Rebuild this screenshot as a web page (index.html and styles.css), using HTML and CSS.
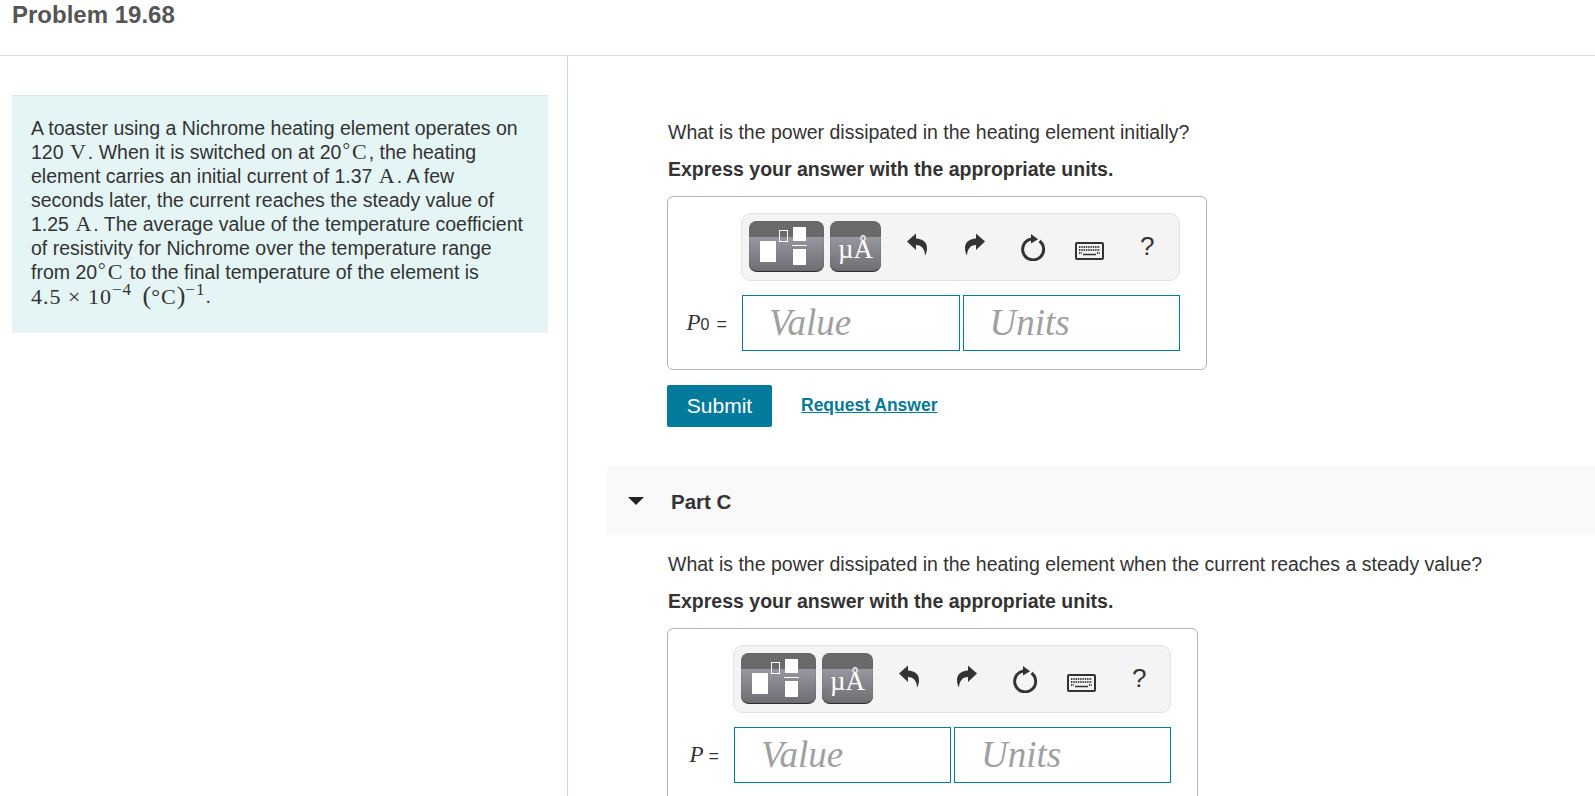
FILE: index.html
```html
<!DOCTYPE html>
<html lang="en">
<head>
<meta charset="utf-8">
<title>Problem 19.68</title>
<link rel="stylesheet" href="styles.css">
</head>
<body>
<svg class="defs" width="0" height="0" aria-hidden="true">
  <symbol id="i-undo" viewBox="0 0 20 24">
    <path d="M0 8.5 L9 0.5 V5.5 C15 5.5 20 9 20 15 C20 18 19.2 20.5 18 22.5 C18 17 15 12 9 12 V17 Z"/>
  </symbol>
  <symbol id="i-redo" viewBox="0 0 20 24">
    <path d="M20 8.5 L11 0.5 V5.5 C5 5.5 0 9 0 15 C0 18 0.8 20.5 2 22.5 C2 17 5 12 11 12 V17 Z"/>
  </symbol>
  <symbol id="i-reset" viewBox="0 0 26 28">
    <path class="ring" d="M19.5 8 A10.5 10.5 0 1 1 11.5 6"/>
    <path d="M11 1 L18 6.2 L11 10.5 Z"/>
  </symbol>
  <symbol id="i-keys" viewBox="0 0 29 18">
    <rect class="kb" x="1" y="1" width="27" height="16" rx="1"/>
    <path class="kbd" d="M4 5h21M4 8h21M4 11h3M22 11h3"/>
    <path class="kbs" d="M8 12.5h13"/>
  </symbol>
</svg>

<header class="topbar"><h1 class="title">Problem 19.68</h1></header>

<main class="layout">
  <aside class="sidebar">
    <div class="intro">
      <p>A toaster using a Nichrome heating element operates on 120 <span class="m">V</span>. When it is switched on at 20<sup class="deg">&deg;</sup><span class="m">C</span>, the heating element carries an initial current of 1.37 <span class="m">A</span>. A few seconds later, the current reaches the steady value of 1.25 <span class="m">A</span>. The average value of the temperature coefficient of resistivity for Nichrome over the temperature range from 20<sup class="deg">&deg;</sup><span class="m">C</span> to the final temperature of the element is <span class="m-line">4.5 &times; 10<sup>&minus;4</sup> <span class="paren">(</span>&deg;C<span class="paren">)</span><sup>&minus;1</sup></span>.</p>
    </div>
  </aside>

  <section class="content">
    <div class="part part-b">
      <p class="question">What is the power dissipated in the heating element initially?</p>
      <p class="instruct">Express your answer with the appropriate units.</p>
      <div class="answer answer-b">
        <div class="toolbar">
          <div class="tb-btn tb-frac">
            <span class="g g-big"></span><span class="g g-small"></span>
            <span class="g g-top"></span><span class="g g-bar"></span><span class="g g-bot"></span>
          </div>
          <div class="tb-btn tb-units"><span class="mu">&micro;&Aring;</span></div>
          <svg class="ic ic-undo"><use href="#i-undo"/></svg>
          <svg class="ic ic-redo"><use href="#i-redo"/></svg>
          <svg class="ic ic-reset"><use href="#i-reset"/></svg>
          <svg class="ic ic-keys"><use href="#i-keys"/></svg>
          <span class="help">?</span>
        </div>
        <div class="entry">
          <span class="label"><i>P</i><span class="sub">0</span> =</span>
          <div class="field">Value</div>
          <div class="field">Units</div>
        </div>
      </div>
      <div class="actions">
        <button class="submit" type="button">Submit</button>
        <a class="request" href="#">Request Answer</a>
      </div>
    </div>

    <div class="part-head">
      <span class="caret"></span>
      <span class="part-name">Part C</span>
    </div>

    <div class="part part-c">
      <p class="question">What is the power dissipated in the heating element when the current reaches a steady value?</p>
      <p class="instruct">Express your answer with the appropriate units.</p>
      <div class="answer answer-c">
        <div class="toolbar">
          <div class="tb-btn tb-frac">
            <span class="g g-big"></span><span class="g g-small"></span>
            <span class="g g-top"></span><span class="g g-bar"></span><span class="g g-bot"></span>
          </div>
          <div class="tb-btn tb-units"><span class="mu">&micro;&Aring;</span></div>
          <svg class="ic ic-undo"><use href="#i-undo"/></svg>
          <svg class="ic ic-redo"><use href="#i-redo"/></svg>
          <svg class="ic ic-reset"><use href="#i-reset"/></svg>
          <svg class="ic ic-keys"><use href="#i-keys"/></svg>
          <span class="help">?</span>
        </div>
        <div class="entry">
          <span class="label"><i>P</i> =</span>
          <div class="field">Value</div>
          <div class="field">Units</div>
        </div>
      </div>
    </div>
  </section>
</main>
</body>
</html>
```
FILE: styles.css
```css
* { box-sizing: border-box; }
html, body { margin: 0; height: 796px; overflow: hidden; }
body { background: #fff; color: #333; font-family: "Liberation Sans", Arial, sans-serif; font-size: 19.5px; }
.defs { position: absolute; }
p { margin: 0; }

.topbar { height: 56px; border-bottom: 1px solid #dcdcdc; padding: 3px 12px 0; }
.title { margin: 0; font-size: 24px; line-height: 24px; font-weight: 700; color: #555; }

.layout { display: grid; grid-template-columns: 568px 1fr; height: 740px; }
.sidebar { border-right: 1px solid #c7d9e6; padding: 39px 19px 0 12px; }
.intro { background: #e5f5f6; border-top: 1px solid #d9e6e8; height: 238px; padding: 20px 20px 0 19px; line-height: 24px; }
.m { font-family: "Liberation Serif", serif; font-size: 22px; line-height: 0; margin: 0 2px 0 1px; }
.m-line { font-family: "Liberation Serif", serif; font-size: 22px; line-height: 0; letter-spacing: 1px; white-space: nowrap; vertical-align: -1px; }
.m-line sup { font-size: 17px; vertical-align: 9px; margin-right: 4px; }
.m-line sup:last-child { margin-right: 0; }
.paren { font-size: 26px; font-weight: 400; line-height: 0; letter-spacing: 0; }
.deg { font-family: "Liberation Serif", serif; font-size: 19px; vertical-align: 3px; margin: 0 1px; }
sup { line-height: 0; }

.content { display: flex; flex-direction: column; min-width: 0; }
.part { padding-left: 99px; }
.part-b { padding-top: 65px; height: 410px; }
.part-c { padding-top: 18px; }
.question { margin-left: 1px; line-height: 22px; }
.instruct { margin: 15px 0 0 1px; font-weight: 700; line-height: 22px; }

.answer { border: 1px solid #b5b5b5; border-radius: 6px; background: #fff; }
.answer-b { width: 540px; height: 174px; margin-top: 16px; padding: 16px 26px 0 73px; }
.answer-c { width: 531px; height: 180px; margin-top: 16px; padding: 16px 26px 0 65px; }

.toolbar { display: flex; align-items: center; height: 68px; background: #f4f4f4; border: 1px solid #e2e2e2; border-radius: 10px; padding: 0 0 0 7px; }
.tb-btn { position: relative; height: 51px; margin-bottom: 1px; border-radius: 8px; background: linear-gradient(#6a6a6a 0 16px, #98969f 16px, #6f6e73 100%); border-bottom: 1px solid #2f2f2f; box-shadow: inset 0 0 1px #444; flex: none; }
.tb-frac { width: 75px; margin-right: 6px; }
.tb-units { width: 51px; margin-right: 26px; }
.g { position: absolute; background: #fff; }
.g-big { left: 11px; top: 20px; width: 16px; height: 21px; }
.g-small { left: 30px; top: 9px; width: 9px; height: 12px; background: transparent; border: 1px solid #fff; }
.g-top { left: 44px; top: 6px; width: 13px; height: 14px; }
.g-bar { left: 43px; top: 24px; width: 15px; height: 1px; }
.g-bot { left: 44px; top: 28px; width: 13px; height: 16px; }
.mu { position: absolute; left: 8px; top: 8px; font-family: "Liberation Serif", serif; font-size: 27px; line-height: 40px; color: #fff; white-space: nowrap; }

.ic { flex: none; fill: #333; }
.ic-undo { width: 20px; height: 24px; margin: 0 38px 4px 0; }
.ic-redo { width: 20px; height: 24px; margin: 0 35px 4px 0; }
.ic-reset { width: 26px; height: 28px; margin-right: 29px; }
.ic-keys { width: 29px; height: 18px; margin: 8px 36px 0 0; }
.ring { fill: none; stroke: #333; stroke-width: 3; }
.kb { fill: none; stroke: #333; stroke-width: 2; }
.kbd { fill: none; stroke: #444; stroke-width: 1.8; stroke-dasharray: 1.4 0.9; }
.kbs { fill: none; stroke: #333; stroke-width: 1.5; }
.help { margin-bottom: 2px; font-size: 26px; line-height: 26px; color: #333; }

.entry { position: relative; display: flex; gap: 3px; margin-top: 14px; padding-left: 1px; }
.label { position: absolute; right: 100%; margin-right: 14px; top: 16px; white-space: nowrap; line-height: 24px; font-size: 18px; }
.label i { font-family: "Liberation Serif", serif; font-size: 23px; }
.sub { font-family: "Liberation Sans", sans-serif; font-size: 16px; margin-right: 2px; }
.field { flex: 1; height: 56px; border: 1px solid #007ea3; background: #fff; padding-left: 26px; font-family: "Liberation Serif", serif; font-style: italic; font-size: 37px; line-height: 53px; color: #a0a0a0; }

.actions { display: flex; align-items: center; margin-top: 15px; }
.submit { width: 105px; height: 42px; border: 0; border-radius: 2px; background: #047a9c; color: #fff; font: 21px "Liberation Sans", Arial, sans-serif; padding: 0; }
.request { margin: 0 0 2px 29px; color: #047a9c; font-weight: 700; font-size: 17.5px; text-decoration: underline; }

.part-head { display: flex; align-items: center; height: 69px; margin-left: 39px; background: #f9f9f9; flex: none; }
.caret { width: 0; height: 0; margin-left: 21px; border-style: solid; border-width: 8px 8px 0; border-color: #222 transparent transparent; }
.part-name { margin-left: 27px; padding-top: 2px; font-weight: 700; font-size: 20.5px; color: #333; }
```
